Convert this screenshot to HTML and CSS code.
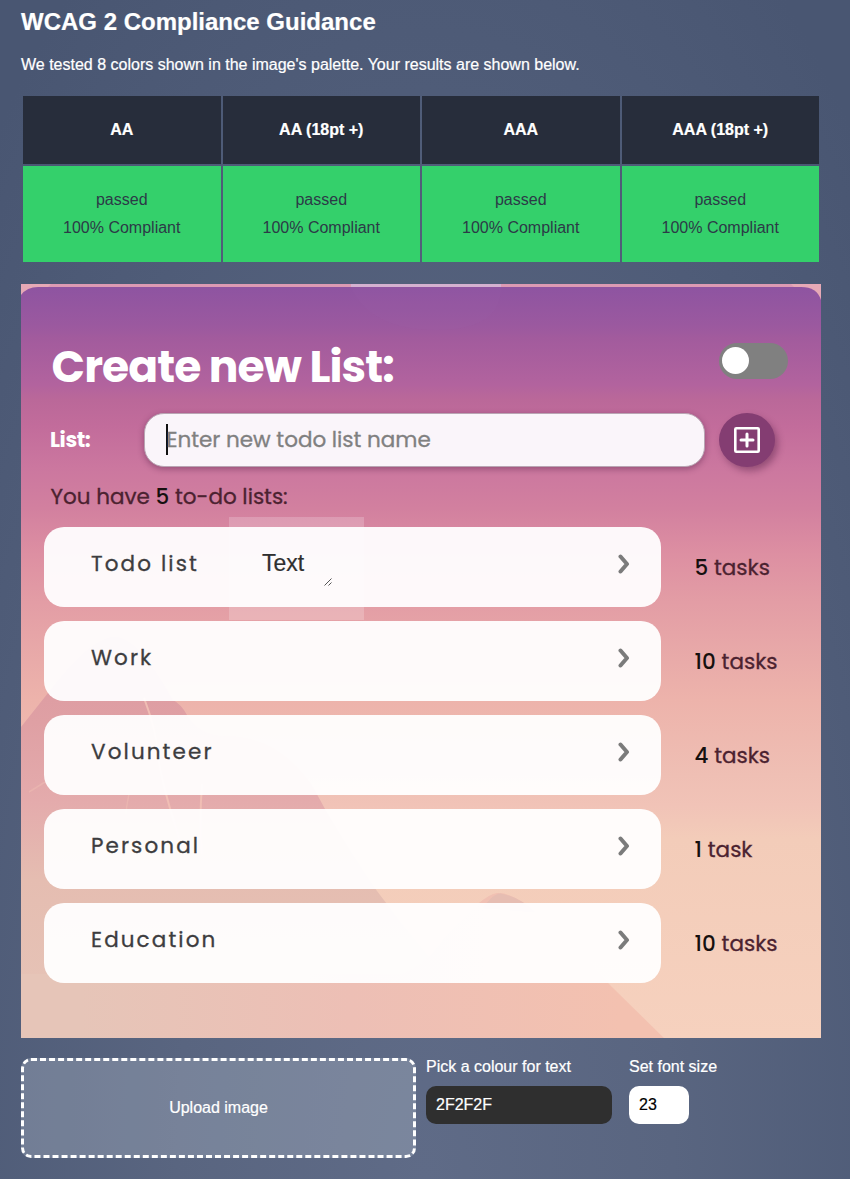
FILE: index.html
```html
<!DOCTYPE html>
<html lang="en">
<head>
<meta charset="utf-8">
<title>WCAG 2 Compliance Guidance</title>
<link rel="stylesheet" href="styles.css">
</head>
<body>
<main class="page">
  <h2 class="heading">WCAG 2 Compliance Guidance</h2>
  <p class="intro">We tested 8 colors shown in the image's palette. Your results are shown below.</p>
  <table class="results">
    <thead><tr><th>AA</th><th>AA (18pt +)</th><th>AAA</th><th>AAA (18pt +)</th></tr></thead>
    <tbody><tr>
      <td>passed<br>100% Compliant</td><td>passed<br>100% Compliant</td><td>passed<br>100% Compliant</td><td>passed<br>100% Compliant</td>
    </tr></tbody>
  </table>

  <section class="preview">
    <svg class="scenery" viewBox="0 0 800 754" aria-hidden="true">
      <defs>
        <linearGradient id="sky" x1="0" y1="0" x2="0" y2="1">
          <stop offset="0" stop-color="#8e54a1"/><stop offset=".052" stop-color="#9b599f"/>
          <stop offset=".068" stop-color="#a25b9d"/><stop offset=".13" stop-color="#b2639e"/>
          <stop offset=".15" stop-color="#ba6899"/><stop offset=".185" stop-color="#c26c9b"/>
          <stop offset=".24" stop-color="#cb779f"/><stop offset=".295" stop-color="#d2809f"/>
          <stop offset=".355" stop-color="#dd8fa2"/><stop offset=".42" stop-color="#e39da5"/>
          <stop offset=".5" stop-color="#e9aba9"/><stop offset=".55" stop-color="#edb3ab"/>
          <stop offset=".65" stop-color="#efbfb4"/><stop offset=".69" stop-color="#f1c3b7"/>
          <stop offset=".735" stop-color="#f3ccb9"/><stop offset="1" stop-color="#f6d1be"/>
        </linearGradient>
        <linearGradient id="hill" x1="0" y1="360" x2="0" y2="754" gradientUnits="userSpaceOnUse">
          <stop offset="0" stop-color="#dc99a1"/><stop offset=".2" stop-color="#dfa0a4"/>
          <stop offset=".4" stop-color="#e4abac"/><stop offset=".6" stop-color="#e5bdb1"/>
          <stop offset="1" stop-color="#e6c5b8"/>
        </linearGradient>
        <linearGradient id="ridge" x1="60" y1="700" x2="600" y2="700" gradientUnits="userSpaceOnUse">
          <stop offset="0" stop-color="#e6c5b8"/><stop offset=".5" stop-color="#edbfb5"/>
          <stop offset="1" stop-color="#f3c1b0"/>
        </linearGradient>
      </defs>
      <rect width="800" height="754" fill="#dc9ab3"/>
      <path d="M0 0H30L0 30ZM770 0H800V30Z" fill="#e6a9b6"/>
      <path d="M330 0H480V4H330Z" fill="#d4b1d0"/>
      <path d="M0 11Q6 3 17 3H780Q796 3 800 16V754H0Z" fill="url(#sky)"/>
      <path d="M330 3Q350 46 415 46T480 3Z" fill="#a05fab" opacity=".12"/>
      <path d="M0 443L27 409Q65 358 90 353T152 416Q160 420 166 431Q178 450 200 452Q255 450 290 500Q296 510 304 525Q328 566 356 607Q410 680 480 754H0Z" fill="url(#hill)"/>
      <path d="M0 754V690H380Q405 680 422 655Q462 610 476 609T512 626Q550 660 590 702L643 754Z" fill="url(#ridge)"/>
      <path d="M462 624Q474 607 482 610Q500 614 514 628Z" fill="#e6bdb2"/>
      <path d="M123 414Q135 445 137 470T160 560M181 500Q178 540 181 570" fill="none" stroke="#f0beb4" stroke-width="2"/>
      <path d="M8 508L24 498M108 510Q105 525 105 530" fill="none" stroke="#f0beb4" stroke-width="1.5" opacity=".5"/>
    </svg>

    <div class="todo">
      <header class="todo-head">
        <h1 class="todo-title">Create new List:</h1>
        <span class="toggle"><span class="knob"></span></span>
      </header>
      <div class="new-list">
        <label class="list-label">List:</label>
        <div class="list-input"><span class="caret"></span><span class="placeholder">Enter new todo list name</span></div>
        <button class="add" aria-label="Add list">
          <svg width="28" height="28" viewBox="0 0 28 28" fill="none" stroke="#fff" stroke-width="2.6" stroke-linejoin="round"><rect x="2.3" y="2.3" width="23.4" height="23.4" rx="1"/><path stroke-width="3" stroke-linecap="round" d="M14 8V20M8 14H20"/></svg>
        </button>
      </div>
      <p class="count">You have <b>5</b> to-do lists:</p>
      <ul class="lists">
        <li class="row"><div class="card"><span class="name">Todo list</span><svg class="chev" viewBox="0 0 12 20"><path d="M2.5 2.5L9 10L2.5 17.5"/></svg></div><span class="tasks"><b>5</b> tasks</span></li>
        <li class="row"><div class="card"><span class="name">Work</span><svg class="chev" viewBox="0 0 12 20"><path d="M2.5 2.5L9 10L2.5 17.5"/></svg></div><span class="tasks"><b>10</b> tasks</span></li>
        <li class="row"><div class="card"><span class="name">Volunteer</span><svg class="chev" viewBox="0 0 12 20"><path d="M2.5 2.5L9 10L2.5 17.5"/></svg></div><span class="tasks"><b>4</b> tasks</span></li>
        <li class="row"><div class="card"><span class="name">Personal</span><svg class="chev" viewBox="0 0 12 20"><path d="M2.5 2.5L9 10L2.5 17.5"/></svg></div><span class="tasks"><b>1</b> task</span></li>
        <li class="row"><div class="card"><span class="name">Education</span><svg class="chev" viewBox="0 0 12 20"><path d="M2.5 2.5L9 10L2.5 17.5"/></svg></div><span class="tasks"><b>10</b> tasks</span></li>
      </ul>
    </div>

    <div class="draggable">
      <div class="sample">Text<svg class="grip" width="8" height="8" viewBox="0 0 8 8"><path d="M.5 7.5L7.5 .5M4.5 7.5L7.5 4.5" stroke="#555" fill="none"/></svg></div>
    </div>
  </section>

  <section class="controls">
    <div class="upload">Upload image</div>
    <div class="field"><label>Pick a colour for text</label><div class="box colour">2F2F2F</div></div>
    <div class="field"><label>Set font size</label><div class="box size">23</div></div>
  </section>
</main>
</body>
</html>
```
FILE: styles.css
```css
* { box-sizing: border-box; }
html { min-height: 100%; background: #4d5a76; }
body {
  margin: 0;
  height: 1179px;
  overflow: hidden;
  font: 16px/28px "Liberation Sans", Arial, sans-serif;
  color: #fff;
  -webkit-text-stroke: .2px;
  background: radial-gradient(ellipse 620px 1450px at 50% 100%, #5f6b87 0%, #596580 40%, #4f5c78 75%, #495672 100%);
}
.page { width: 800px; margin-left: 21px; }
.heading { margin: 0; font-size: 24px; line-height: 43px; }
.intro { margin: 8px 0 15px; line-height: 28px; }
.results { width: 800px; height: 170px; border-spacing: 2px; table-layout: fixed; text-align: center; }
.results th { height: 68px; padding: 0; background: #272d3b; }
.results td { height: 96px; padding: 0; background: #34d06b; color: #2c3a47; -webkit-text-stroke: 0; }

.preview { position: relative; width: 800px; height: 754px; margin-top: 20px; overflow: hidden; }
.scenery { position: absolute; inset: 0; width: 800px; height: 754px; }
.todo { position: relative; padding: 51px 23px 0; font-family: Poppins, Inter, sans-serif; font-size: 21.5px; color: #4b2230; -webkit-text-stroke: .3px; }
.todo-head { display: flex; justify-content: space-between; align-items: flex-start; height: 78px; padding: 0 10.5px 0 7.5px; }
.todo-title { margin: 0; font-size: 44px; line-height: 64px; font-weight: 700; letter-spacing: -.9px; color: #fff; white-space: nowrap; -webkit-text-stroke: 0; }
.toggle { width: 69px; height: 36px; margin-top: 8px; padding: 4px 3px; border-radius: 18px; background: #808080; }
.knob { display: block; width: 27px; height: 27px; border-radius: 50%; background: #fff; }
.new-list { display: flex; align-items: center; height: 53px; padding-left: 6px; }
.list-label { width: 94px; font-weight: 700; font-size: 21px; letter-spacing: -.4px; color: #fff; -webkit-text-stroke: 0; }
.list-input { display: flex; align-items: center; width: 561px; height: 54px; padding-left: 21px; border: 1px solid #b9a5b3; border-radius: 20px; background: #faf5fa; color: #808080; box-shadow: 0 2px 6px rgba(70,20,60,.4); }
.caret { width: 1.5px; height: 31px; background: #111; }
.placeholder { margin-left: -1px; letter-spacing: -.03px; white-space: nowrap; }
.add { display: grid; place-items: center; width: 56px; height: 54px; margin-left: 14px; padding: 0; border: 0; border-radius: 50%; background: #843d72; box-shadow: 3px 4px 7px rgba(70,20,60,.4); }
.count { margin: 17px 0 16px 6.5px; letter-spacing: -.02px; }
.count b, .tasks b { font-weight: 500; color: #16100f; -webkit-text-stroke: 0; }
.lists { margin: 0; padding: 0; list-style: none; display: grid; gap: 14px; }
.row { display: flex; align-items: center; height: 80px; }
.card { display: flex; justify-content: space-between; align-items: center; width: 617px; height: 80px; padding: 0 31px 7px 47px; border-radius: 20px; background: rgba(255,255,255,.94); color: #3d3d3f; }
.name { letter-spacing: 2.1px; }
.chev { width: 12px; height: 20px; fill: none; stroke: #7b7b7b; stroke-width: 4; stroke-linecap: round; stroke-linejoin: round; }
.tasks { margin-left: 33.5px; padding-top: 1px; }

.draggable { position: absolute; left: 208px; top: 233px; width: 135px; height: 103px; padding: 30px; background: rgba(255,255,255,.2); }
.sample { position: relative; width: 75px; height: 40px; padding: 2px 3px; font-size: 23px; line-height: 28px; color: #2f2f2f; }
.grip { position: absolute; right: 2px; bottom: 1px; }

.controls { display: flex; margin-top: 20px; }
.upload { display: grid; place-items: center; width: 395px; height: 100px; margin-right: 10px; border: 3px dashed #fff; border-radius: 10px; background: rgba(190,200,212,.3); }
.field { margin-right: 17px; }
.field label { display: block; height: 28px; line-height: 17px; }
.box { height: 38px; padding-left: 10px; border-radius: 10px; line-height: 38px; }
.colour { width: 186px; background: #2f2f2f; }
.size { width: 60px; background: #fff; color: #000; }
```
